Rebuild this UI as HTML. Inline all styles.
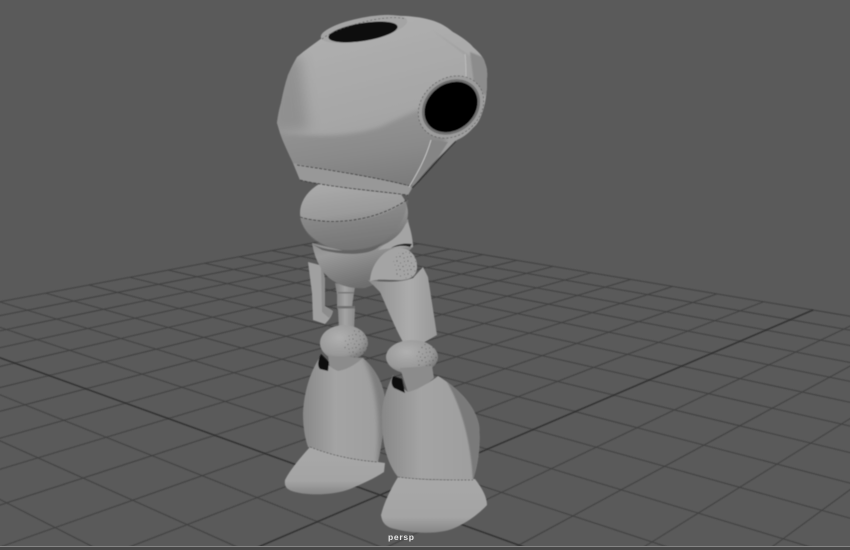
<!DOCTYPE html>
<html><head><meta charset="utf-8"><title>persp</title>
<style>
html,body{margin:0;padding:0;background:#5a5a5a;width:850px;height:550px;overflow:hidden}
#v{position:relative;width:850px;height:550px;overflow:hidden}
svg{position:absolute;left:0;top:0;display:block}
.lbl{position:absolute;left:388px;top:532px;font:bold 8.5px/10px "Liberation Sans",sans-serif;letter-spacing:.7px;color:#e4e4e4}
.b1{position:absolute;left:0;top:546px;width:850px;height:1px;background:#858585}
.b2{position:absolute;left:0;top:547px;width:850px;height:3px;background:#484848}
</style></head><body><div id="v">
<svg width="850" height="550" viewBox="0 0 850 550" xmlns="http://www.w3.org/2000/svg">
<defs>
<filter id="s1" x="-10%" y="-10%" width="120%" height="120%"><feGaussianBlur stdDeviation=".55"/></filter>
<filter id="s2" x="-30%" y="-30%" width="160%" height="160%"><feGaussianBlur stdDeviation="2"/></filter>
<filter id="s6" x="-40%" y="-40%" width="180%" height="180%"><feGaussianBlur stdDeviation="6"/></filter>
<linearGradient id="head" x1="0.3" y1="0" x2="0.6" y2="1"><stop offset="0" stop-color="#b0b0b0"/><stop offset=".55" stop-color="#a6a6a6"/><stop offset="1" stop-color="#989898"/></linearGradient>
<linearGradient id="low" x1="0" y1="0" x2="0.3" y2="1"><stop offset="0" stop-color="#989898"/><stop offset=".6" stop-color="#8a8a8a"/><stop offset="1" stop-color="#7a7a7a"/></linearGradient>
<linearGradient id="ball" x1="0.35" y1="0" x2="0.55" y2="1"><stop offset="0" stop-color="#aeaeae"/><stop offset=".5" stop-color="#9a9a9a"/><stop offset="1" stop-color="#6a6a6a"/></linearGradient>
<linearGradient id="pelvis" x1="0" y1="0" x2="0.4" y2="1"><stop offset="0" stop-color="#7a7a7a"/><stop offset=".5" stop-color="#9a9a9a"/><stop offset="1" stop-color="#6e6e6e"/></linearGradient>
<linearGradient id="shin" x1="0" y1="0" x2="1" y2="0"><stop offset="0" stop-color="#888"/><stop offset=".4" stop-color="#a4a4a4"/><stop offset="1" stop-color="#9e9e9e"/></linearGradient>
<linearGradient id="foot" x1="0" y1="0" x2="0" y2="1"><stop offset="0" stop-color="#a8a8a8"/><stop offset=".72" stop-color="#a4a4a4"/><stop offset="1" stop-color="#858585"/></linearGradient>
<linearGradient id="thigh" x1="0" y1="0" x2="1" y2="0"><stop offset="0" stop-color="#8c8c8c"/><stop offset=".6" stop-color="#acacac"/><stop offset="1" stop-color="#989898"/></linearGradient>
<linearGradient id="shaft" x1="0" y1="0" x2="1" y2="0"><stop offset="0" stop-color="#808080"/><stop offset=".5" stop-color="#a4a4a4"/><stop offset="1" stop-color="#8a8a8a"/></linearGradient>
<radialGradient id="kn" cx=".4" cy=".35" r=".7"><stop offset="0" stop-color="#b0b0b0"/><stop offset=".7" stop-color="#989898"/><stop offset="1" stop-color="#727272"/></radialGradient>
<pattern id="dots" width="11" height="13" patternUnits="userSpaceOnUse"><circle cx="1" cy="1" r=".6" fill="#333"/><circle cx="4.5" cy="3" r=".5" fill="#333"/><circle cx="8.5" cy="1.5" r=".45" fill="#333"/><circle cx="2.5" cy="6" r=".55" fill="#333"/><circle cx="7" cy="6.5" r=".6" fill="#333"/><circle cx="10" cy="5" r=".4" fill="#333"/><circle cx="0.5" cy="10" r=".45" fill="#333"/><circle cx="4" cy="9.5" r=".6" fill="#333"/><circle cx="8" cy="11" r=".5" fill="#333"/></pattern>
<clipPath id="hc"><path d="M322 38 C330 30 350 19 370 17 C385 15 410 15 427 19 C440 22 447 27 453 32 C462 37 470 43 473 47 C480 53 484 58 485 63 C488 70 487 76 487 80 C487 90 486 100 484 107 C481 118 478 124 473 128 C468 134 462 138 457 140 C449 148 440 156 433 163 C425 172 418 180 413 187 L408 195 C370 192 335 187 300 180 L293 163 C288 152 283 142 280 133 L277 123 C278 115 279 110 281 103 C283 93 285 84 288 75 C291 68 294 62 297 57 C305 50 314 44 322 38Z"/></clipPath>
<clipPath id="rs"><path d="M393 375 C386 390 381 405 382 420 C382 445 388 465 398 477 C420 480 450 480 473 480 C478 465 481 445 479 425 C475 405 458 388 438 376 C430 382 418 390 408 392 C402 388 397 381 393 375Z"/></clipPath>
<clipPath id="ls"><path d="M320 357 C310 372 304 392 303 413 C303 428 305 438 308 447 C325 453 350 460 378 462 C382 445 385 420 385 400 C384 385 375 368 363 358 C358 362 350 369 338 371 C330 368 325 362 320 357Z"/></clipPath>
</defs>
<g stroke="#3e3e3e" stroke-width="1" fill="none" opacity=".9" filter="url(#s1)">
<path d="M360 234L-511.6 398M388.7 238.8L-494 413.3M418.7 243.8L-475.2 429.6M450 249.1L-454.8 447.4M482.8 254.6L-432.5 466.7M517.2 260.3L-408.1 488M553.2 266.4L-381.4 511.2M591.1 272.7L-352 536.8M630.9 279.4L-268.4 550M672.8 286.4L-138.3 550M717 293.9L-8.3 550M763.7 301.7L121.6 550M865.3 318.8L380.8 550M920.7 328L509.8 550M979.7 338L639 550M1042.5 348.5L767.8 550"/>
<path d="M360.2 234L1181 371.8M332 239.2L1168.5 386M302.6 244.8L1154.8 401.6M271.7 250.6L1140 418.6M239 256.8L1123.7 437.1M204.7 263.2L1105.8 457.5M168.3 270.1L1086.1 480M129.8 277.3L1064.3 504.8M89 285L1040 532.6M45.7 293.2L963.6 550M-.4 301.8L820.2 550M-49.5 311.1L676.5 550M-158.1 331.6L388.2 550M-218.5 342.9L243.7 550M-283.3 355.1L99.1 550"/>
</g>
<g stroke="#333" stroke-width="1.5" fill="none" filter="url(#s1)">
<path d="M813 310L251.2 550M-102 321L532.3 550"/>
</g>

<g filter="url(#s1)">
<!-- back plate -->
<path d="M308 262 L320 265 C323 270 325 275 325 282 L325 306 L333 311 C332 316 329 320 325 324 L313 320 L312 293Z" fill="#a0a0a0"/>
<path d="M321 267 C324 272 325 276 325 282 L325 306 L333 311 C332 314 331 316 329 318 L322 312Z" fill="#8c8c8c"/>
<!-- shaft -->
<path d="M335 283 L355 287 L354 293 L352 307 L355 309 L354 330 L339 331 L338 310 L337 308 L337 295Z" fill="url(#shaft)"/>
<rect x="337" y="306" width="18" height="2.5" fill="#6f6f6f"/>
<rect x="338" y="292" width="16" height="1.5" fill="#777"/>
<!-- left knee -->
<ellipse cx="344" cy="343" rx="24" ry="18" fill="url(#kn)"/>
<ellipse cx="356" cy="345" rx="12" ry="15" fill="url(#dots)" opacity=".55"/>
<!-- pelvis -->
<path d="M312 243 C314 255 318 265 325 274 C335 285 350 289 365 288 L373 285 L378 280 L413 247 L408 219 L380 245 L345 251Z" fill="url(#pelvis)"/>
<path d="M378 250 L408 222 C411 230 413 240 413 247 L392 248Z" fill="#a4a4a4"/>
<!-- upper ball -->
<ellipse cx="354" cy="213" rx="54" ry="38" fill="url(#ball)"/>
<path d="M300 217 C330 226 380 224 408 199 C405 228 385 250 350 250 C322 250 305 238 300 217Z" fill="#7c7c7c" opacity=".55" filter="url(#s1)"/>
<path d="M312 244 C335 255 370 250 382 243 C375 256 345 256 322 250Z" fill="#646464"/>
<path d="M300 217 C330 226 376 222 408 199" stroke="#3a3a3a" stroke-width=".9" stroke-dasharray="3 1.5" fill="none"/>
<!-- thigh -->
<path d="M368 280 C380 282 400 283 413 278 L423 267 L428 277 L437 335 L423 343 L405 345 C398 335 388 310 380 292Z" fill="url(#thigh)"/>
<!-- hip ball -->
<path d="M370 281 C371 265 382 251 395 248 C410 246 418 257 417 268 C416 279 406 281 393 280 C385 280 378 279 370 281Z" fill="#a4a4a4"/>
<ellipse cx="405" cy="265" rx="12" ry="14" fill="url(#dots)" opacity=".65"/>
<path d="M391 248 C397 244 405 243 412 244 L410 247 C403 245 397 246 391 248Z" fill="#222"/>
<!-- right knee -->
<ellipse cx="412" cy="357" rx="26" ry="17" fill="url(#kn)"/>
<ellipse cx="427" cy="358" rx="11" ry="14" fill="url(#dots)" opacity=".6"/>
<!-- left shin -->
<path d="M328 356 L363 358 L361 366 C350 372 340 373 330 370Z" fill="#8c8c8c"/>
<path d="M320 357 C310 372 304 392 303 413 C303 428 305 438 308 447 C325 453 350 460 378 462 C382 445 385 420 385 400 C384 385 375 368 363 358 C358 362 350 369 338 371 C330 368 325 362 320 357Z" fill="url(#shin)"/>
<g clip-path="url(#ls)"><path d="M362 356 C376 380 381 420 377 462 L395 462 L392 356Z" fill="#7e7e7e" filter="url(#s2)"/></g>
<path d="M321 354 C318 360 317 366 320 369 L328 371 L329 362 Z" fill="#0c0c0c"/>
<!-- left foot -->
<path d="M310 447 C300 458 290 470 285 480 C284 487 287 490 295 492 C310 496 335 495 350 489 C362 484 375 478 384 472 L385 463 L378 462 C350 460 325 453 310 447Z" fill="url(#foot)"/>
<!-- right connector + shin -->
<path d="M400 368 L432 366 L434 378 C425 386 415 392 408 393Z" fill="#8c8c8c"/>
<path d="M393 375 C386 390 381 405 382 420 C382 445 388 465 398 477 C420 480 450 480 473 480 C478 465 481 445 479 425 C475 405 458 388 438 376 C430 382 418 390 408 392 C402 388 397 381 393 375Z" fill="url(#shin)"/>
<g clip-path="url(#rs)"><path d="M442 374 C460 400 471 440 473 482 L490 482 L490 400Z" fill="#7a7a7a" filter="url(#s1)"/></g>
<path d="M393 376 C391 380 391 385 394 388 L405 393 L402 379Z" fill="#0c0c0c"/>
<!-- right foot -->
<path d="M398 477 C390 490 384 503 381 515 C382 522 385 527 395 529 C410 533 430 534 445 531 C460 528 478 515 487 505 C487 497 482 488 475 479 C450 481 420 480 398 477Z" fill="url(#foot)"/>
<g fill="none" stroke="#3a3a3a" stroke-width=".7" stroke-dasharray="2 1.5" opacity=".8">
<path d="M398 477 C420 480 450 480 473 480"/>
<path d="M310 447 C325 453 350 460 378 462"/>
</g>
<!-- head -->
<path d="M322 38 C330 30 350 19 370 17 C385 15 410 15 427 19 C440 22 447 27 453 32 C462 37 470 43 473 47 C480 53 484 58 485 63 C488 70 487 76 487 80 C487 90 486 100 484 107 C481 118 478 124 473 128 C468 134 462 138 457 140 C449 148 440 156 433 163 C425 172 418 180 413 187 L408 195 C370 192 335 187 300 180 L293 163 C288 152 283 142 280 133 L277 123 C278 115 279 110 281 103 C283 93 285 84 288 75 C291 68 294 62 297 57 C305 50 314 44 322 38Z" fill="url(#head)"/>
<g clip-path="url(#hc)">
<path d="M270 60 L300 55 L308 130 L270 135Z" fill="#868686" opacity=".7" filter="url(#s6)"/>
<path d="M270 131 C310 138 350 137 380 127 C400 118 420 108 430 107 L450 130 L430 175 L410 200 L295 190Z" fill="url(#low)" filter="url(#s2)"/>
<path d="M432 30 C450 42 462 50 470 56 L490 62 L490 100 L468 90 L465 55Z" fill="#9c9c9c" opacity=".55" filter="url(#s1)"/>
<path d="M292 163 C330 170 380 178 412 187 L408 196 L298 182Z" fill="#989898"/>
<path d="M431 140 L448 142 L433 165 L415 187 L411 183Z" fill="#858585"/>
<path d="M470 52 L490 60 L490 100 L474 84Z" fill="#8c8c8c" filter="url(#s1)"/>
</g>
<path d="M297 165 C330 170 380 178 410 186 M300 180 C335 188 370 190 408 195" fill="none" stroke="#2e2e2e" stroke-width=".8" stroke-dasharray="3 1.5"/>
<path d="M431 140 C425 160 418 172 409 187" fill="none" stroke="#cfcfcf" stroke-width=".8"/>
<path d="M456 141 C446 150 430 170 412 188" fill="none" stroke="#2a2a2a" stroke-width="1.1"/>
<path d="M465 54 C466 62 466 70 466 78" fill="none" stroke="#cacaca" stroke-width=".6"/>
<!-- top hole -->
<ellipse cx="364" cy="29" rx="44" ry="11.5" transform="rotate(-11 364 29)" fill="#a4a4a4"/>
<ellipse cx="363" cy="32" rx="35" ry="9" transform="rotate(-9 363 32)" fill="#0a0a0a"/>
<path d="M322 39 C335 28 385 13 406 19" fill="none" stroke="#505050" stroke-width=".6" stroke-dasharray="2 2"/>
<!-- side hole -->
<ellipse cx="451" cy="107" rx="35" ry="28.5" transform="rotate(-38 451 107)" fill="#9c9c9c"/>
<ellipse cx="451" cy="107" rx="35" ry="28.5" transform="rotate(-38 451 107)" fill="none" stroke="#4a4a4a" stroke-width=".6" stroke-dasharray="2 2"/>
<ellipse cx="451" cy="107" rx="31" ry="25.5" transform="rotate(-38 451 107)" fill="#707070"/>
<ellipse cx="451" cy="107" rx="28.5" ry="23" transform="rotate(-38 451 107)" fill="#060606"/>
</g>
</svg>
<div class="lbl">persp</div>
<div class="b1"></div><div class="b2"></div>
</div></body></html>
